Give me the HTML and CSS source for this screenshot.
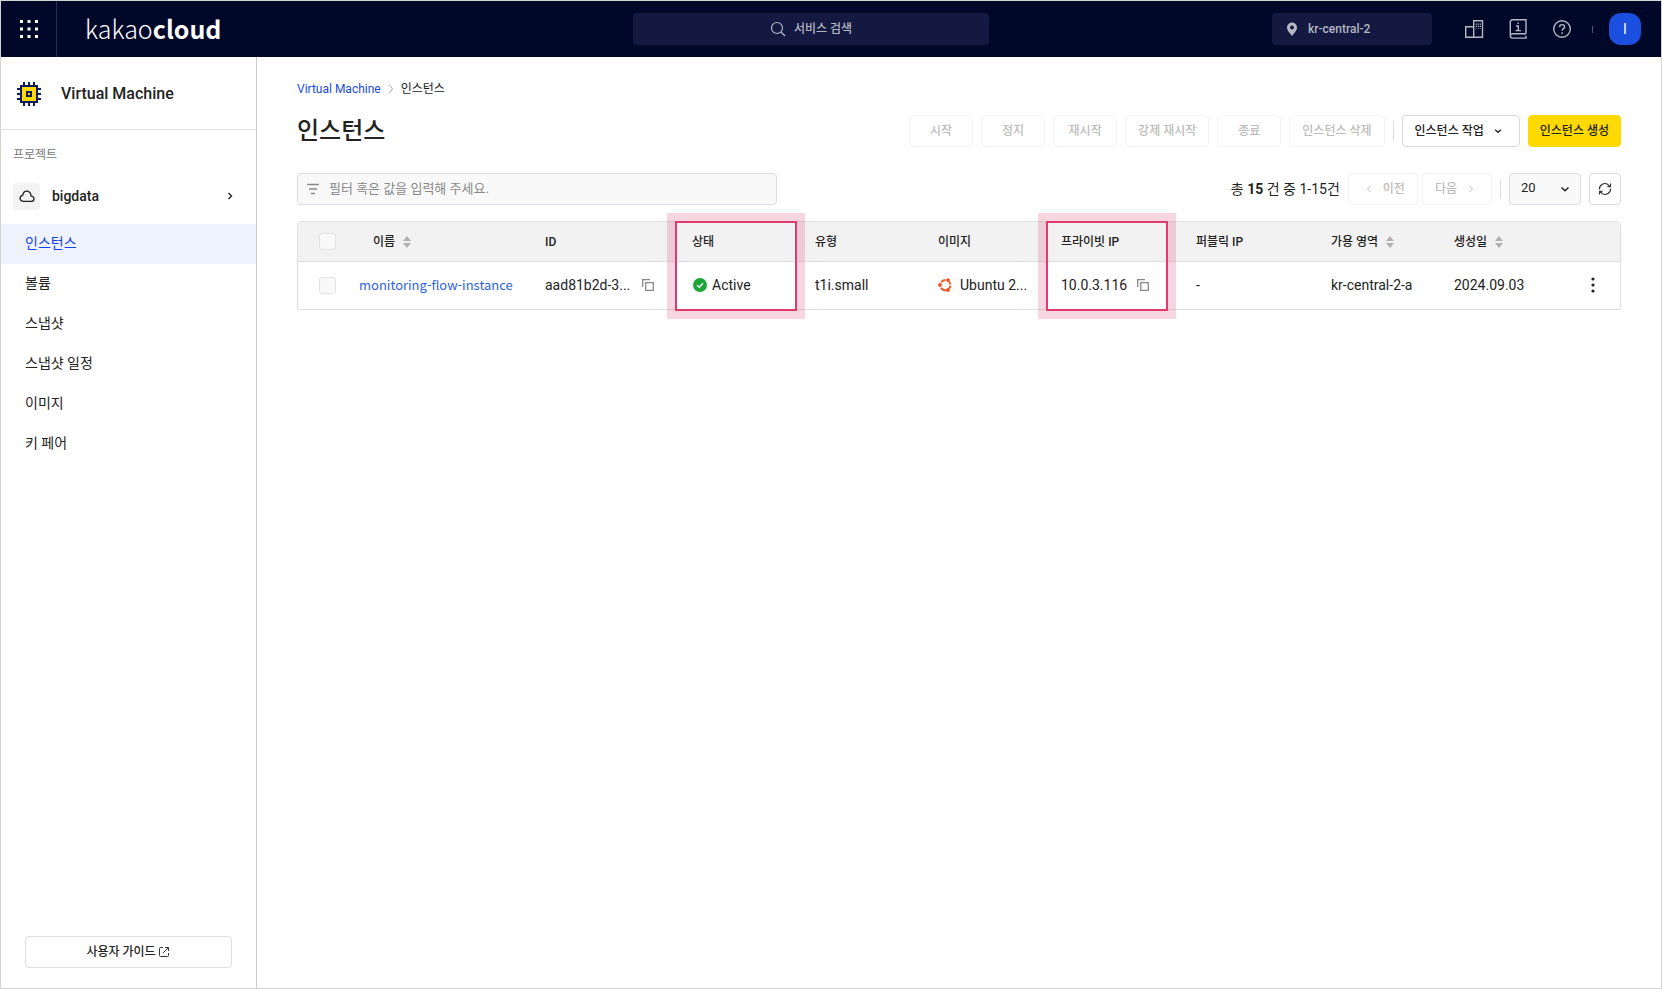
FILE: index.html
```html
<!DOCTYPE html>
<html lang="ko">
<head>
<meta charset="utf-8">
<meta name="viewport" content="width=device-width, initial-scale=1">
<title>인스턴스 - Virtual Machine</title>
<link rel="stylesheet" href="styles.css">
</head>
<body>
<div class="app">
  <header class="topbar">
    <div class="topbar-left">
      <button class="waffle" type="button" aria-label="전체 메뉴">
        <svg width="20" height="20" viewBox="0 0 20 20" fill="#fff"><path d="M1 1h3v3H1zM8.500 1h3v3h-3zM16 1h3v3h-3zM1 8.500h3v3H1zM8.500 8.500h3v3h-3zM16 8.500h3v3h-3zM1 16h3v3H1zM8.500 16h3v3h-3zM16 16h3v3h-3z"/></svg>
      </button>
      <a class="logo" href="#">kakao<b>cloud</b></a>
    </div>
    <button class="search" type="button">
      <svg width="16" height="16" viewBox="0 0 16 16" fill="none" stroke="currentColor" stroke-width="1.200"><circle cx="7" cy="7" r="5.500"/><path d="M11 11l4 4"/></svg>
      서비스 검색
    </button>
    <div class="topbar-right">
      <button class="region" type="button">
        <svg width="16" height="16" viewBox="0 0 16 16" fill="currentColor"><path fill-rule="evenodd" d="M8 1.500a5 5 0 0 0-5 5c0 3.400 3.200 6 5 8.500 1.800-2.500 5-5.100 5-8.500a5 5 0 0 0-5-5zM8 4.600a2 2 0 1 1 0 4 2 2 0 0 1 0-4z"/></svg>
        kr-central-2
      </button>
      <div class="tools">
        <button type="button" class="tool" aria-label="조직"><svg width="20" height="20" viewBox="0 0 20 20" fill="none" stroke="currentColor" stroke-width="1.400"><path d="M1.700 18.300v-10.600h8v10.600zM9.700 18.300V1.700h8.800v16.600z"/><path d="M12.300 4.500v5M14.300 4.500v5M16.300 4.500v5" stroke-width="1.200" stroke-dasharray="1.200 1"/></svg></button>
        <button type="button" class="tool" aria-label="문서"><svg width="20" height="20" viewBox="0 0 20 20" fill="none" stroke="currentColor" stroke-width="1.400"><path d="M18 14.800V.8H4.300a2 2 0 0 0-2 2v14a2.300 2.300 0 0 0 2.300 2.300H18v-2.300M18 14.800H4.500a2 2 0 0 0-2 1.700"/><path d="M8 7h2.300v4.500M7.500 11.600h5.400M9.400 4.200h1.400"/></svg></button>
        <button type="button" class="tool" aria-label="도움말"><svg width="20" height="20" viewBox="0 0 20 20" fill="none" stroke="currentColor" stroke-width="1.400"><circle cx="10" cy="10" r="8.300"/><path d="M7.600 8.200c0-3.300 5-3.300 5-.4 0 1.900-2.500 1.800-2.500 4M10.100 13.200v1.700"/></svg></button>
        <span class="tool-sep"></span>
      </div>
      <button class="avatar" type="button">I</button>
    </div>
  </header>

  <div class="body">
    <aside class="sidebar">
      <div class="service">
        <svg width="24" height="24" viewBox="0 0 24 24"><path d="M7 0v24M12 0v24M17 0v24M0 7h24M0 12h24M0 17h24" stroke="#0b1b5e" stroke-width="2"/><rect x="4" y="4" width="16" height="16" fill="#ffd900" stroke="#0b1b5e" stroke-width="2"/><rect x="10" y="10" width="4" height="4" fill="#ffd900" stroke="#0b1b5e" stroke-width="2"/></svg>
        <h2>Virtual Machine</h2>
      </div>
      <p class="project-label">프로젝트</p>
      <button class="project" type="button">
        <span class="project-icon"><svg width="16" height="16" viewBox="0 0 16 16" fill="none" stroke="#222" stroke-width="1.300" stroke-linejoin="round"><path d="M4 13.300h8.600c3.300-.5 3.200-4.700-.5-5.100-.4-6.400-7.500-7-8.400-.8-3.600.8-3.500 5.300.3 5.900z"/></svg></span>
        <span class="project-name">bigdata</span>
        <svg width="8" height="8" viewBox="0 0 8 8" fill="none" stroke="#222" stroke-width="1.400"><path d="M2.500 1l3 3-3 3"/></svg>
      </button>
      <nav class="menu">
        <a class="active" href="#">인스턴스</a>
        <a href="#">볼륨</a>
        <a href="#">스냅샷</a>
        <a href="#">스냅샷 일정</a>
        <a href="#">이미지</a>
        <a href="#">키 페어</a>
      </nav>
      <a class="guide" href="#">사용자 가이드
        <svg width="10" height="10" viewBox="0 0 10 10" fill="none" stroke="#333"><path d="M4 .5H1.500a1 1 0 0 0-1 1v7a1 1 0 0 0 1 1h7a1 1 0 0 0 1-1V6M6 .5h3.500V4M9.300.7L3.800 6.200"/></svg>
      </a>
    </aside>

    <main class="content">
      <nav class="breadcrumb">
        <a href="#">Virtual Machine</a>
        <svg width="8" height="10" viewBox="0 0 8 10" fill="none" stroke="#aaa"><path d="M2.500 1l3 4-3 4"/></svg>
        <span>인스턴스</span>
      </nav>
      <div class="title-row">
        <h1>인스턴스</h1>
        <div class="actions">
          <button class="btn" type="button" disabled>시작</button>
          <button class="btn" type="button" disabled>정지</button>
          <button class="btn" type="button" disabled>재시작</button>
          <button class="btn" type="button" disabled>강제 재시작</button>
          <button class="btn" type="button" disabled>종료</button>
          <button class="btn" type="button" disabled>인스턴스 삭제</button>
          <span class="sep"></span>
          <button class="btn more" type="button">인스턴스 작업
            <svg width="8" height="8" viewBox="0 0 8 8" fill="none" stroke="#222" stroke-width="1.300"><path d="M1.200 2.700L4 5.300l2.800-2.600"/></svg>
          </button>
          <button class="btn primary" type="button">인스턴스 생성</button>
        </div>
      </div>

      <div class="filter-row">
        <label class="filter">
          <svg width="16" height="16" viewBox="0 0 16 16" fill="none" stroke="#888" stroke-width="1.300"><path d="M2 3.500h12M4 8h8M6 12.500h4"/></svg>
          <input type="text" aria-label="필터" placeholder="필터 혹은 값을 입력해 주세요.">
        </label>
        <div class="pager">
          <p class="total">총 <b>15</b> 건 중 1-15건</p>
          <button class="btn page prev" type="button" disabled><svg width="8" height="8" viewBox="0 0 8 8" fill="none" stroke="currentColor"><path d="M5.500 1l-3 3 3 3"/></svg>이전</button>
          <button class="btn page next" type="button" disabled>다음<svg width="8" height="8" viewBox="0 0 8 8" fill="none" stroke="currentColor"><path d="M2.500 1l3 3-3 3"/></svg></button>
          <span class="sep"></span>
          <span class="size">
            <select aria-label="페이지당 개수"><option>20</option></select>
            <svg width="10" height="10" viewBox="0 0 10 10" fill="none" stroke="#222" stroke-width="1.500"><path d="M1.500 3.500L5 6.800l3.500-3.300"/></svg>
          </span>
          <button class="btn refresh" type="button" aria-label="새로고침"><svg width="14" height="14" viewBox="0 0 14 14" fill="none" stroke="#333" stroke-width="1.100"><path d="M1.500 7.500C1 3 6 .3 9.500 2.300L12 4.600M12.500 1.500v3.300H9.300M12.500 6.500c.5 4.500-4.500 7.200-8 5.200L2 9.400M1.500 12.500V9.200h3.200"/></svg></button>
        </div>
      </div>

      <table class="grid">
        <colgroup>
          <col class="c-check"><col class="c-name"><col class="c-id"><col class="c-text"><col class="c-text"><col class="c-text"><col class="c-ip"><col class="c-ip"><col class="c-text"><col class="c-date"><col class="c-menu">
        </colgroup>
        <thead>
          <tr>
            <th class="check"><input type="checkbox" aria-label="전체 선택" disabled></th>
            <th class="name">이름 <svg class="sort" width="8" height="12" viewBox="0 0 8 12"><path d="M0 5l4-5 4 5zM0 7l4 5 4-5z"/></svg></th>
            <th>ID</th>
            <th class="marked">상태<span class="mark"></span></th>
            <th>유형</th>
            <th>이미지</th>
            <th class="marked">프라이빗 IP<span class="mark mark-ip"></span></th>
            <th>퍼블릭 IP</th>
            <th>가용 영역 <svg class="sort" width="8" height="12" viewBox="0 0 8 12"><path d="M0 5l4-5 4 5zM0 7l4 5 4-5z"/></svg></th>
            <th>생성일 <svg class="sort" width="8" height="12" viewBox="0 0 8 12"><path d="M0 5l4-5 4 5zM0 7l4 5 4-5z"/></svg></th>
            <th></th>
          </tr>
        </thead>
        <tbody>
          <tr>
            <td class="check"><input type="checkbox" aria-label="monitoring-flow-instance 선택" disabled></td>
            <td><a class="instance" href="#">monitoring-flow-instance</a></td>
            <td><div class="cell"><span class="id">aad81b2d-3...</span><button class="copy" type="button" aria-label="ID 복사"><svg width="12" height="12" viewBox="0 0 12 12" fill="none" stroke="#888" stroke-width="1.300"><path d="M.7 8V.7H8M3.700 3.700h7.600v7.600H3.700z"/></svg></button></div></td>
            <td><div class="cell status"><svg width="14" height="14" viewBox="0 0 14 14"><circle cx="7" cy="7" r="7" fill="#1ba63a"/><path d="M4 7.100l2.200 2.100L10 5.200" fill="none" stroke="#fff" stroke-width="1.400"/></svg>Active</div></td>
            <td>t1i.small</td>
            <td><div class="cell os"><svg width="14" height="14" viewBox="0 0 14 14" fill="none" stroke="#e95420" stroke-width="1.800"><path d="M3 4.400A5 5 0 0 1 7.500 2M10.800 3.700A5 5 0 0 1 12.400 6.500M12.400 7.600A5 5 0 0 1 11 10.600M8 12.200A5 5 0 0 1 3 9.700"/><g fill="#e95420" stroke="none"><circle cx="2" cy="7" r="1.900"/><circle cx="10" cy="2.100" r="1.900"/><circle cx="9.900" cy="12" r="1.900"/></g></svg>Ubuntu 2...</div></td>
            <td><div class="cell">10.0.3.116<button class="copy" type="button" aria-label="IP 복사"><svg width="12" height="12" viewBox="0 0 12 12" fill="none" stroke="#888" stroke-width="1.300"><path d="M.7 8V.7H8M3.700 3.700h7.600v7.600H3.700z"/></svg></button></div></td>
            <td>-</td>
            <td>kr-central-2-a</td>
            <td>2024.09.03</td>
            <td class="row-menu"><button class="dots" type="button" aria-label="더보기"><svg width="4" height="16" viewBox="0 0 4 16" fill="#222"><circle cx="2" cy="2" r="1.600"/><circle cx="2" cy="8" r="1.600"/><circle cx="2" cy="14" r="1.600"/></svg></button></td>
          </tr>
        </tbody>
      </table>
    </main>
  </div>
</div>
</body>
</html>
```

FILE: styles.css
```css
* { box-sizing: border-box; }

body {
  margin: 0;
  color: #222;
  font: 14px/20px Roboto, "Noto Sans CJK KR", sans-serif;
}

h1, h2, p { margin: 0; }
a { color: inherit; text-decoration: none; }
svg { display: block; flex: none; }

button, input, select { font: inherit; color: inherit; }
button { margin: 0; padding: 0; border: 0; background: none; }

.app {
  display: flex;
  flex-direction: column;
  min-height: 100vh;
  border: 1px solid #d4d4d4;
}

/* Top bar */
.topbar {
  display: flex;
  align-items: center;
  height: 56px;
  background: #000829;
}
.topbar-left {
  display: flex;
  flex: 1 1 0;
  align-items: center;
  gap: 28px;
}
.waffle {
  display: grid;
  place-items: center;
  width: 56px;
  height: 56px;
  border-right: 1px solid #282e49;
}
.logo {
  padding-bottom: 2px;
  color: #fff;
  font: 300 25px/32px "Noto Sans CJK KR", sans-serif;
}
.logo b { font-weight: 700; }
.search, .region {
  display: flex;
  align-items: center;
  height: 32px;
  border-radius: 4px;
  background: #131940;
  color: #b5b7c3;
  font-size: 12px;
  font-weight: 500;
}
.search {
  flex: 0 1 356px;
  justify-content: center;
  gap: 8px;
}
.topbar-right {
  display: flex;
  flex: 1 1 40px;
  align-items: center;
  justify-content: flex-end;
  padding-right: 20px;
}
.region {
  gap: 8px;
  width: 160px;
  margin-right: 32px;
  padding-left: 12px;
}
.tools {
  display: flex;
  align-items: center;
  gap: 24px;
  margin-right: 16px;
  color: #b5b7c3;
}
.tool-sep {
  width: 1px;
  height: 7px;
  margin-left: -4px;
  background: #555a70;
}
.avatar {
  width: 32px;
  height: 32px;
  border-radius: 12px;
  background: #1a4fe0;
  color: #fff;
}

.body { display: flex; flex: 1; }

/* Sidebar */
.sidebar {
  display: flex;
  flex: none;
  flex-direction: column;
  width: 256px;
  border-right: 1px solid #ccc;
}
.service {
  display: flex;
  align-items: center;
  gap: 20px;
  height: 73px;
  padding: 1px 0 0 16px;
  border-bottom: 1px solid #e0e0e0;
}
.service h2 {
  font-size: 16px;
  font-weight: 500;
}
.project-label {
  padding: 15px 12px 13px;
  color: #777;
  font-size: 12px;
}
.project {
  display: flex;
  align-items: center;
  gap: 12px;
  height: 36px;
  margin-bottom: 10px;
  padding: 0 22px 0 12px;
  text-align: left;
}
.project-icon {
  display: grid;
  place-items: center;
  width: 27px;
  height: 27px;
  border-radius: 4px;
  background: #f3f3f3;
}
.project-name { flex: 1; font-weight: 500; }
.menu a {
  display: block;
  height: 40px;
  padding: 9px 24px;
}
.menu .active {
  background: #eff3ff;
  color: #1343e6;
}
.guide {
  display: flex;
  align-items: center;
  justify-content: center;
  gap: 3px;
  height: 32px;
  margin: auto 24px 20px;
  padding-right: 2px;
  border: 1px solid #e0e0e0;
  border-radius: 4px;
  font-size: 12px;
  font-weight: 500;
}

/* Content */
.content {
  flex: 1;
  min-width: 0;
  padding: 22px 40px;
}
.breadcrumb {
  display: flex;
  align-items: center;
  gap: 6px;
  font-size: 12px;
}
.breadcrumb a { color: #1a4bdc; }
.title-row {
  display: flex;
  align-items: center;
  justify-content: space-between;
  margin-top: 16px;
}
h1 { font-size: 24px; line-height: 32px; font-weight: 500; }
.actions, .pager {
  display: flex;
  align-items: center;
  gap: 8px;
}
.btn {
  display: flex;
  align-items: center;
  justify-content: center;
  min-width: 64px;
  height: 32px;
  padding: 0 12px;
  border: 1px solid #d9d9de;
  border-radius: 4px;
  background: #fff;
  font-size: 12px;
  font-weight: 500;
  white-space: nowrap;
}
.btn:disabled { border-color: #f4f4f5; color: #bcbcbc; }
.more { gap: 10px; padding: 0 17px 0 12px; }
.primary { padding: 0 11px; border-color: #ffd900; background: #ffd900; }
.sep {
  width: 1px;
  height: 20px;
  background: #ddd;
}

.filter-row {
  display: flex;
  align-items: center;
  justify-content: space-between;
  gap: 16px;
  margin-top: 26px;
}
.filter {
  display: flex;
  flex: 0 1 480px;
  align-items: center;
  gap: 8px;
  height: 32px;
  padding: 0 7px;
  border: 1px solid #dcdce2;
  border-radius: 4px;
  background: #f9f9f9;
}
.filter input {
  flex: 1;
  min-width: 0;
  padding: 0;
  border: 0;
  outline: 0;
  background: none;
  font-size: 13px;
}
.filter input::placeholder { color: #888; opacity: 1; }
.total { white-space: nowrap; }
.page { gap: 10px; min-width: 70px; }
.prev { margin-right: -4px; padding: 0 12px 0 16px; }
.next { padding: 0 16px 0 12px; }
.size {
  position: relative;
  width: 72px;
}
.size select {
  display: block;
  width: 100%;
  height: 32px;
  padding: 0 11px 2px;
  border: 1px solid #dcdce2;
  border-radius: 4px;
  appearance: none;
  background: #f9f9f9;
  font-size: 13px;
}
.size svg {
  position: absolute;
  top: 11px;
  right: 11px;
  pointer-events: none;
}
.refresh { min-width: 32px; padding: 0; }

/* Instance table */
.grid {
  width: 100%;
  margin-top: 16px;
  border: 1px solid #dfdfdf;
  border-radius: 4px 4px 0 0;
  border-spacing: 0;
  table-layout: fixed;
}
.c-check { width: 47px; }
.c-name { width: 186px; }
.c-id { width: 147px; }
.c-text { width: 123px; }
.c-ip { width: 135px; }
.c-date { width: 125px; }
.c-menu { width: 55px; }
.grid th, .grid td {
  padding: 0 0 0 14px;
  text-align: left;
  white-space: nowrap;
}
.grid th {
  height: 40px;
  border-bottom: 1px solid #dfdfdf;
  background: #f2f2f2;
  font-size: 12px;
  font-weight: 500;
}
.grid th:first-child { border-top-left-radius: 3px; }
.grid th:last-child { border-top-right-radius: 3px; }
.grid td { height: 47px; padding-bottom: 1px; }
.grid .name { padding-left: 28px; }
.grid .check { padding-left: 21px; }
.check input {
  display: block;
  width: 17px;
  height: 17px;
  margin: 0;
  border: 1px solid #e2e2e2;
  border-radius: 3px;
  appearance: none;
  background: #f9f9f9;
}
.sort {
  display: inline-block;
  margin-left: 5px;
  fill: #b0b0b0;
  vertical-align: -2px;
}
.instance {
  display: block;
  color: #2e62e6;
  font-family: "Noto Sans CJK KR", sans-serif;
  font-size: 13px;
}
.cell { display: flex; align-items: center; gap: 10px; }
.status { gap: 5px; padding-left: 1px; }
.os { gap: 8px; }
.id { min-width: 87px; }
.grid .row-menu { padding-left: 26px; }
.dots { display: block; }
.marked { position: relative; }

/* Outlined call-out around a column */
.mark {
  position: absolute;
  z-index: 1;
  top: -1px;
  left: -3px;
  width: 122px;
  height: 90px;
  border: 2px solid #e03b6f;
  box-shadow: 0 0 0 8px rgba(222, 50, 107, .2);
  pointer-events: none;
}
.mark-ip { left: -1px; }
```
